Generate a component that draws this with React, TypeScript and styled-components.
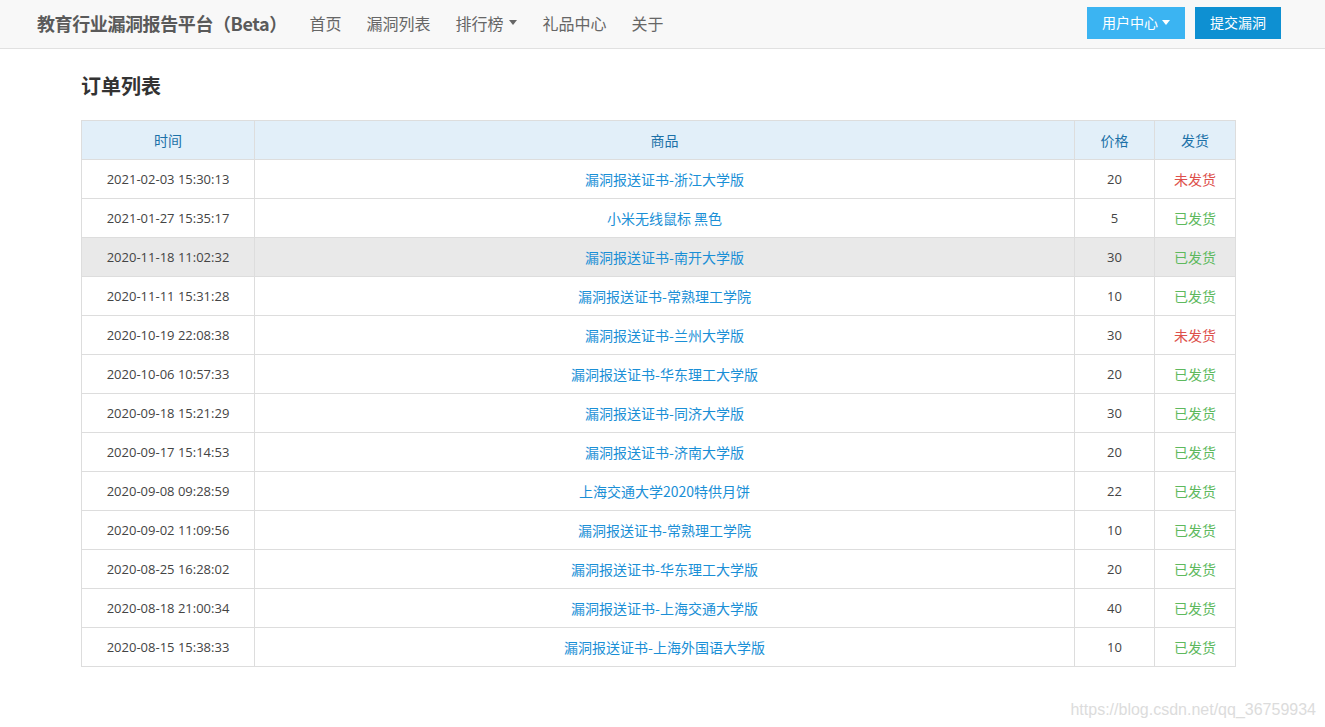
import React from 'react';
import styled, { createGlobalStyle } from 'styled-components';

const GlobalStyle = createGlobalStyle`
  html, body {
    margin: 0;
    padding: 0;
    background: #fff;
    font-family: "Open Sans", "Noto Sans CJK SC", sans-serif;
    color: #333;
  }
`;

const Page = styled.div`
  position: relative;
  width: 1325px;
  min-height: 727px;
`;

// navbar
const NavBar = styled.header`
  height: 49px;
  box-sizing: border-box;
  display: flex;
  align-items: center;
  padding: 0 44px 3px 37px;
  background: #f8f8f8;
  border-bottom: 1px solid #e1e1e1;
`;

const Brand = styled.div`
  font-family: "Noto Sans CJK SC", sans-serif;
  font-size: 18px;
  font-weight: 700;
  color: #5a5a5a;
  letter-spacing: -0.4px;
  margin-right: 10px;
`;

const NavList = styled.nav`
  display: flex;
  align-items: center;
  flex: 1;
`;

const NavItem = styled.a`
  font-family: "Noto Sans CJK SC", sans-serif;
  font-size: 16px;
  color: #666;
  padding: 0 12.5px;
  display: inline-flex;
  align-items: center;
  gap: 6px;
  cursor: pointer;
`;

const Caret = styled.span<{ color?: string }>`
  display: inline-block;
  width: 0;
  height: 0;
  border-left: 4px solid transparent;
  border-right: 4px solid transparent;
  border-top: 5px solid ${({ color }) => color || '#666'};
`;

const Actions = styled.div`
  display: flex;
  gap: 10px;
  margin-top: 1px;
`;

const Button = styled.button<{ $light?: boolean }>`
  height: 32px;
  padding: 0 15px 2px;
  border: none;
  display: inline-flex;
  align-items: center;
  gap: 4px;
  font-family: "Noto Sans CJK SC", sans-serif;
  font-size: 14px;
  color: #fff;
  background: ${({ $light }) => ($light ? '#3bb4f2' : '#0e90d2')};
  cursor: pointer;
`;

// content
const Content = styled.main`
  padding: 24px 0 0 81px;
`;

const Title = styled.h2`
  margin: 0 0 21px;
  font-family: "Noto Sans CJK SC", sans-serif;
  font-size: 20px;
  font-weight: 700;
  line-height: 26px;
  color: #333;
`;

const Table = styled.table`
  width: 1155px;
  border-collapse: collapse;
  table-layout: fixed;
  font-size: 14px;
`;

const HeadCell = styled.th<{ w?: number }>`
  width: ${({ w }) => (w ? `${w}px` : 'auto')};
  height: 38px;
  padding: 0;
  border: 1px solid #ddd;
  background: #e2eff9;
  font-family: "Noto Sans CJK SC", sans-serif;
  font-weight: 400;
  font-size: 14px;
  color: #1c71a8;
  text-align: center;
`;

const Row = styled.tr<{ $hover?: boolean }>`
  background: ${({ $hover }) => ($hover ? '#e9e9e9' : '#fff')};
`;

const Cell = styled.td<{ $size?: number; $color?: string }>`
  height: 38px;
  padding: 0;
  border: 1px solid #ddd;
  text-align: center;
  font-family: "Open Sans", "Noto Sans CJK SC", sans-serif;
  font-size: ${({ $size }) => $size || 14}px;
  color: ${({ $color }) => $color || '#333'};
`;

const ProductLink = styled.a`
  font-family: "Noto Sans CJK SC", sans-serif;
  color: #1a8fd6;
  text-decoration: none;
  cursor: pointer;
`;

const Watermark = styled.div`
  position: absolute;
  right: 9px;
  bottom: 8px;
  font-family: "Liberation Sans", Arial, sans-serif;
  font-size: 16px;
  color: #dcdcdc;
`;

const orders = [
  { time: '2021-02-03 15:30:13', name: '漏洞报送证书-浙江大学版', price: 20, shipped: false },
  { time: '2021-01-27 15:35:17', name: '小米无线鼠标 黑色', price: 5, shipped: true },
  { time: '2020-11-18 11:02:32', name: '漏洞报送证书-南开大学版', price: 30, shipped: true },
  { time: '2020-11-11 15:31:28', name: '漏洞报送证书-常熟理工学院', price: 10, shipped: true },
  { time: '2020-10-19 22:08:38', name: '漏洞报送证书-兰州大学版', price: 30, shipped: false },
  { time: '2020-10-06 10:57:33', name: '漏洞报送证书-华东理工大学版', price: 20, shipped: true },
  { time: '2020-09-18 15:21:29', name: '漏洞报送证书-同济大学版', price: 30, shipped: true },
  { time: '2020-09-17 15:14:53', name: '漏洞报送证书-济南大学版', price: 20, shipped: true },
  { time: '2020-09-08 09:28:59', name: '上海交通大学2020特供月饼', price: 22, shipped: true },
  { time: '2020-09-02 11:09:56', name: '漏洞报送证书-常熟理工学院', price: 10, shipped: true },
  { time: '2020-08-25 16:28:02', name: '漏洞报送证书-华东理工大学版', price: 20, shipped: true },
  { time: '2020-08-18 21:00:34', name: '漏洞报送证书-上海交通大学版', price: 40, shipped: true },
  { time: '2020-08-15 15:38:33', name: '漏洞报送证书-上海外国语大学版', price: 10, shipped: true },
];

const App = () => {
  return (
    <Page>
      <GlobalStyle />
      <NavBar>
        <Brand>教育行业漏洞报告平台（Beta）</Brand>
        <NavList>
          <NavItem>首页</NavItem>
          <NavItem>漏洞列表</NavItem>
          <NavItem>
            排行榜
            <Caret />
          </NavItem>
          <NavItem>礼品中心</NavItem>
          <NavItem>关于</NavItem>
        </NavList>
        <Actions>
          <Button $light>
            用户中心
            <Caret color="#fff" />
          </Button>
          <Button>提交漏洞</Button>
        </Actions>
      </NavBar>

      <Content>
        <Title>订单列表</Title>
        <Table>
          <thead>
            <tr>
              <HeadCell w={172}>时间</HeadCell>
              <HeadCell>商品</HeadCell>
              <HeadCell w={79}>价格</HeadCell>
              <HeadCell w={80}>发货</HeadCell>
            </tr>
          </thead>
          <tbody>
            {orders.map((o, i) => (
              <Row key={o.time} $hover={i === 2}>
                <Cell $size={13} $color="#444">{o.time}</Cell>
                <Cell>
                  <ProductLink>{o.name}</ProductLink>
                </Cell>
                <Cell $size={13} $color="#444">{o.price}</Cell>
                <Cell $color={o.shipped ? '#5eb95e' : '#dd514c'}>
                  {o.shipped ? '已发货' : '未发货'}
                </Cell>
              </Row>
            ))}
          </tbody>
        </Table>
      </Content>
      <Watermark>https://blog.csdn.net/qq_36759934</Watermark>
    </Page>
  );
};

export default App;
